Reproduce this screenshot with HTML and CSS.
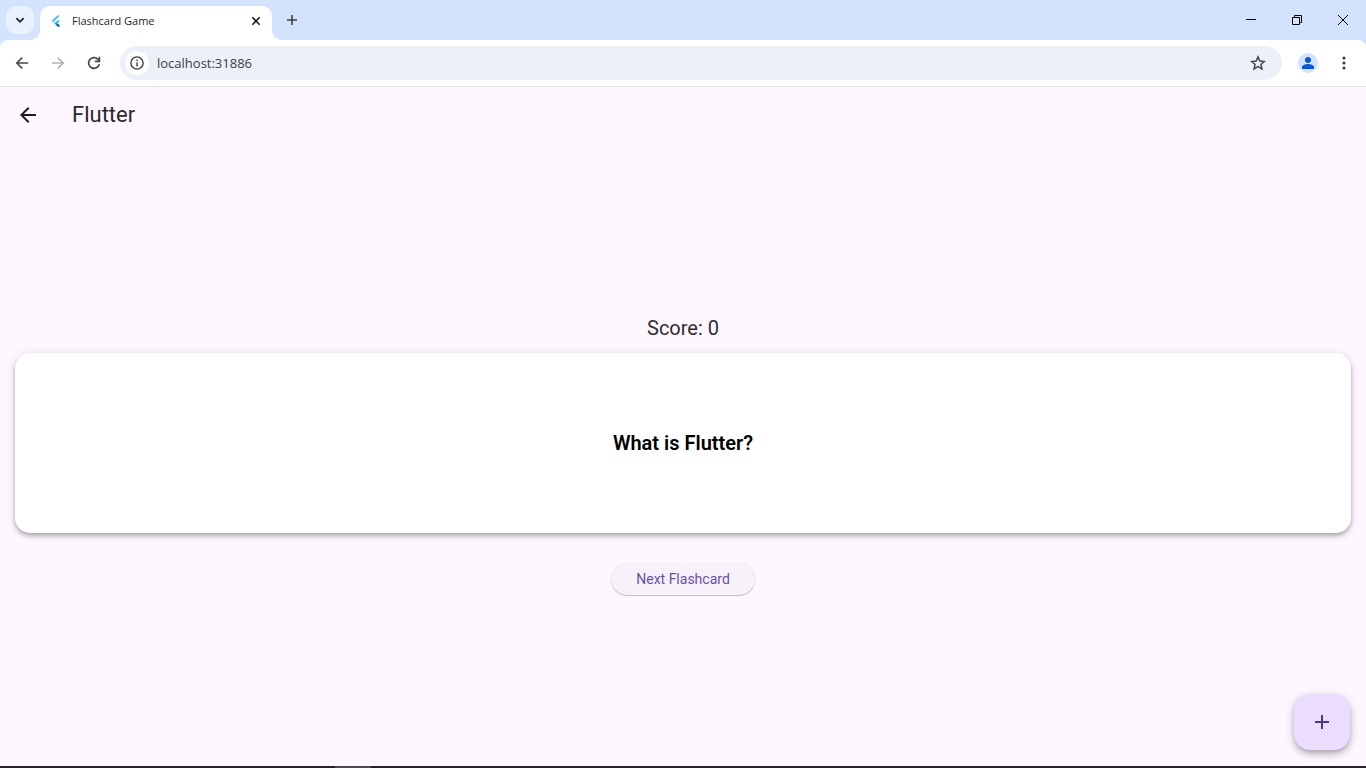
FILE: index.html
```html
<!DOCTYPE html>
<html lang="en">
<head>
<meta charset="utf-8">
<meta name="viewport" content="width=device-width, initial-scale=1">
<title>Flashcard Game</title>
<link rel="stylesheet" href="styles.css">
</head>
<body>
<div class="browser">
  <header class="tab-strip">
    <button class="tab-search" aria-label="Search tabs">
      <svg width="10" height="10" viewBox="0 0 10 10" fill="none" stroke="#1f1f1f" stroke-width="1.8"><path d="M1.4 3.200l3.600 3.600 3.600-3.600"/></svg>
    </button>
    <div class="tab">
      <svg class="favicon" width="16" height="16" viewBox="0 0 16 16"><path fill="#54c5f8" d="M9.200 2.600h3L5 9.600 3.400 8z"/><path fill="#40c4f0" d="M9.200 7.600h3L8.200 11.800 6.400 10.200z"/><path fill="#29b6f6" d="M6.400 10.200L8 8.700l1.600 1.600L8 11.900z"/><path fill="#01579b" d="M8 11.900l1.600-1.600 2.800 3.300H9.400z"/></svg>
      <span class="tab-title">Flashcard Game</span>
      <button class="tab-close" aria-label="Close tab">
        <svg width="10" height="10" viewBox="0 0 10 10" stroke="#1f1f1f" stroke-width="1.6"><path d="M1.300 1.300l7.400 7.400M8.700 1.300L1.300 8.700"/></svg>
      </button>
    </div>
    <button class="new-tab" aria-label="New tab">
      <svg width="12" height="12" viewBox="0 0 12 12" stroke="#3c4043" stroke-width="1.6"><path d="M6 1v10M1 6h10"/></svg>
    </button>
    <div class="window-controls">
      <button aria-label="Minimize"><svg width="10" height="10" viewBox="0 0 10 10" stroke="#000"><path d="M0 4.500h10"/></svg></button>
      <button aria-label="Restore"><svg width="10" height="10" viewBox="0 0 10 10" fill="none" stroke="#000"><path d="M.5 2.500h7v7h-7zM2.500 2.500v-2h7v7h-2"/></svg></button>
      <button aria-label="Close"><svg width="10" height="10" viewBox="0 0 10 10" stroke="#000"><path d="M0 0l10 10M10 0L0 10"/></svg></button>
    </div>
  </header>

  <div class="toolbar-back">
  <nav class="toolbar" aria-label="Browser toolbar">
    <button class="tool" aria-label="Back"><svg width="14" height="14" viewBox="0 0 14 14" fill="none" stroke="#46494d" stroke-width="1.6"><path d="M13.200 7H2M7.200 1.600L1.800 7l5.400 5.400"/></svg></button>
    <button class="tool" aria-label="Forward" disabled><svg width="14" height="14" viewBox="0 0 14 14" fill="none" stroke="#b0b2b5" stroke-width="1.6"><path d="M.8 7H12M6.800 1.600L12.200 7l-5.400 5.400"/></svg></button>
    <button class="tool" aria-label="Reload"><svg width="14" height="14" viewBox="0 0 14 14" fill="none" stroke="#46494d" stroke-width="1.7"><path d="M12.300 8.200A5.400 5.400 0 1 1 11 3.300L12.300 5"/><path d="M12.400.8v4.600H7.800"/></svg></button>
    <div class="address-bar">
      <button class="site-info" aria-label="Site information"><svg width="14" height="14" viewBox="0 0 14 14" fill="none" stroke="#3c4043" stroke-width="1.4"><circle cx="7" cy="7" r="6.1"/><path d="M7 6.200v4.200M7 3.600v1.500"/></svg></button>
      <input class="url" type="text" aria-label="Address" value="localhost:31886" spellcheck="false">
      <button class="bookmark" aria-label="Bookmark this tab"><svg width="16" height="16" viewBox="0 0 16 16" fill="none" stroke="#46494d" stroke-width="1.5"><path d="M8 1.900l1.800 4.200 4.600.4-3.500 3 1.100 4.500L8 11.600 4 14l1.100-4.500-3.500-3 4.600-.4z"/></svg></button>
    </div>
    <button class="profile" aria-label="Profile"><svg width="14" height="14" viewBox="0 0 14 14" fill="#0b57d0"><circle cx="7" cy="4" r="3"/><path d="M1 13v-2.100C1 9 4.500 8 7 8s6 1 6 2.900V13z"/></svg></button>
    <button class="menu" aria-label="Menu"><svg width="4" height="14" viewBox="0 0 4 14" fill="#3c4043"><circle cx="2" cy="2" r="1.600"/><circle cx="2" cy="7" r="1.600"/><circle cx="2" cy="12" r="1.600"/></svg></button>
  </nav>
  </div>

  <div class="app">
    <header class="app-bar">
      <button class="app-back" aria-label="Back"><svg width="24" height="24" viewBox="0 0 24 24" fill="#1d1b20"><path d="M20 11H7.830l5.590-5.590L12 4l-8 8 8 8 1.410-1.410L7.830 13H20v-2z"/></svg></button>
      <h1 class="app-title">Flutter</h1>
    </header>
    <main class="content">
      <p class="score">Score: 0</p>
      <section class="flashcard"><h2 class="question">What is Flutter?</h2></section>
      <button class="next">Next Flashcard</button>
    </main>
    <button class="fab" aria-label="Add flashcard"><svg width="24" height="24" viewBox="0 0 24 24" fill="#4f378b"><path d="M19 13h-6v6h-2v-6H5v-2h6V5h2v6h6v2z"/></svg></button>
  </div>
  <footer class="taskbar"><span class="taskbar-active"></span></footer>
</div>
</body>
</html>
```
FILE: styles.css
```css
* {
  box-sizing: border-box;
}

body {
  margin: 0;
  font-family: Roboto, sans-serif;
}

button {
  display: flex;
  align-items: center;
  justify-content: center;
  flex: none;
  padding: 0;
  border: 0;
  background: none;
}

svg {
  display: block;
  flex: none;
}

.browser {
  display: flex;
  flex-direction: column;
  height: 100vh;
  background: #fef7ff;
}

/* Tabs and window controls */
.tab-strip {
  display: flex;
  align-items: center;
  height: 40px;
  padding-left: 6px;
  background: #d3e3fd;
}

.tab-search {
  width: 28px;
  height: 28px;
  border-radius: 10px;
  background: #eaf1fe;
}

.tab {
  position: relative;
  display: flex;
  align-items: center;
  align-self: flex-end;
  width: 232px;
  height: 34px;
  margin-left: 6px;
  padding: 0 8px 5px;
  border-radius: 10px 10px 0 0;
  background: #fff;
}

.tab::before,
.tab::after {
  content: "";
  position: absolute;
  bottom: 0;
  width: 10px;
  height: 10px;
}

.tab::before {
  right: 100%;
  background: radial-gradient(circle at 0 0, transparent 10px, #fff 10px);
}

.tab::after {
  left: 100%;
  background: radial-gradient(circle at 100% 0, transparent 10px, #fff 10px);
}

.tab-title {
  flex: 1;
  margin-left: 8px;
  font: 11px/16px "Open Sans", sans-serif;
  color: #1f1f1f;
}

.tab-close {
  width: 16px;
  height: 16px;
}

.new-tab {
  width: 28px;
  height: 28px;
  margin-left: 6px;
}

.window-controls {
  display: flex;
  margin-left: auto;
}

.window-controls button {
  width: 46px;
  height: 40px;
}

/* Toolbar */
.toolbar-back {
  background: #d3e3fd;
}

.toolbar {
  display: flex;
  align-items: center;
  height: 47px;
  padding: 0 8px 1px 4px;
  border-bottom: 1px solid #dfdfe2;
  border-radius: 8px 8px 0 0;
  background: #fff;
}

.tool {
  width: 36px;
  height: 34px;
}

.address-bar {
  display: flex;
  flex: 1;
  align-items: center;
  height: 34px;
  margin-left: 8px;
  padding: 0 10px 0 5px;
  border-radius: 17px;
  background: #ebf0f9;
}

.site-info {
  width: 24px;
  height: 24px;
  border-radius: 50%;
  background: #fff;
}

.url {
  flex: 1;
  min-width: 0;
  height: 24px;
  margin-left: 8px;
  padding: 0;
  border: 0;
  outline: 0;
  background: none;
  font: 13px/24px "Open Sans", sans-serif;
  color: #3c3e42;
}

.bookmark {
  width: 28px;
  height: 28px;
}

.profile {
  width: 20px;
  height: 20px;
  margin-left: 16px;
  border-radius: 50%;
  background: #d3e3fd;
}

.menu {
  width: 28px;
  height: 28px;
  margin-left: 12px;
}

/* Application */
.app {
  position: relative;
  display: flex;
  flex: 1;
  flex-direction: column;
}

.app-bar {
  display: flex;
  align-items: center;
  height: 56px;
}

.app-back {
  width: 56px;
  height: 56px;
}

.app-title {
  margin: 0 0 0 16px;
  font-size: 22px;
  font-weight: 400;
  line-height: 28px;
  color: #2a282d;
}

.content {
  display: flex;
  flex: 1;
  flex-direction: column;
  align-items: center;
  justify-content: center;
  padding: 0 15px 2px;
}

.score {
  margin: 0 0 9px;
  font-size: 20px;
  line-height: 32px;
  color: #2e2c31;
}

.flashcard {
  display: flex;
  align-items: center;
  justify-content: center;
  width: 100%;
  height: 180px;
  border-radius: 15px;
  background: #fff;
  box-shadow: 0 2px 4px -1px rgba(0, 0, 0, 0.2), 0 4px 5px rgba(0, 0, 0, 0.14), 0 1px 10px rgba(0, 0, 0, 0.12);
}

.question {
  margin: 0;
  font-size: 20px;
  font-weight: 600;
  line-height: 28px;
  color: #000;
}

.next {
  height: 32px;
  margin-top: 30px;
  padding: 0 25px;
  border-radius: 16px;
  background: #f7f2fa;
  box-shadow: 0 1px 1px rgba(0, 0, 0, 0.22), 0 0 1px rgba(0, 0, 0, 0.14);
  font: 400 14px/20px Roboto, sans-serif;
  color: #6750a4;
}

.fab {
  position: absolute;
  right: 16px;
  bottom: 16px;
  width: 56px;
  height: 56px;
  border-radius: 16px;
  background: #eaddff;
  box-shadow: 0 3px 5px -1px rgba(0, 0, 0, 0.2), 0 5px 8px rgba(0, 0, 0, 0.14), 0 1px 12px rgba(0, 0, 0, 0.1);
}

.taskbar {
  display: flex;
  height: 2px;
  padding-left: 335px;
  background: #23222b;
}

.taskbar-active {
  width: 36px;
  background: #4d4c55;
}
```
